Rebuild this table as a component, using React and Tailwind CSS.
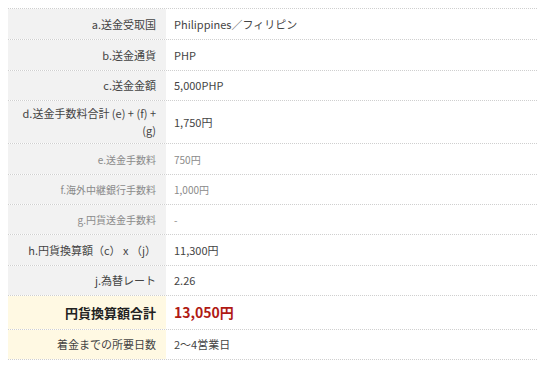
const rows = [
  { label: 'a.送金受取国', value: 'Philippines／フィリピン', h: 'h-[31px]' },
  { label: 'b.送金通貨', value: 'PHP', h: 'h-[31px]' },
  { label: 'c.送金金額', value: '5,000PHP', h: 'h-[30px]' },
  {
    label: (
      <>
        <span className="whitespace-nowrap">d.送金手数料合計 (e) + (f) +</span>
        <br />
        (g)
      </>
    ),
    value: '1,750円',
    h: 'h-[43px]',
  },
  { label: 'e.送金手数料', value: '750円', h: 'h-[31px]', sub: true },
  { label: 'f.海外中継銀行手数料', value: '1,000円', h: 'h-[30px]', sub: true },
  { label: 'g.円貨送金手数料', value: '-', h: 'h-[30px]', sub: true },
  { label: 'h.円貨換算額（c） x （j）', value: '11,300円', h: 'h-[31px]' },
  { label: 'j.為替レート', value: '2.26', h: 'h-[30px]' },
]

function Row({ label, value, h, sub }) {
  return (
    <div className={`flex border-b border-dotted border-[#cfcfcf] ${h}`}>
      <div
        className={`w-[158px] shrink-0 bg-[#f2f2f2] flex items-center justify-end text-right pr-[10px] leading-[17px] ${
          sub ? 'text-[10px] text-[#8a8a8a]' : 'text-[11px] text-[#444]'
        }`}
      >
        <span>{label}</span>
      </div>
      <div
        className={`flex-1 flex items-center pl-[8px] ${
          sub ? 'text-[10px] text-[#8a8a8a]' : 'text-[11px] text-[#444]'
        }`}
      >
        {value}
      </div>
    </div>
  )
}

export default function App() {
  return (
    <div
      className="w-[550px] h-[366px] bg-white pt-[8px] pl-[8px]"
      style={{ fontFamily: '"Noto Sans CJK JP", "Noto Sans", sans-serif' }}
    >
      <div className="w-[529px] border-t border-dotted border-[#cfcfcf]">
        {rows.map((r, i) => (
          <Row key={i} {...r} />
        ))}
        <div className="flex h-[34px] border-b border-dotted border-[#cfcfcf]">
          <div className="w-[158px] shrink-0 bg-[#fff9e3] flex items-center justify-end pr-[10px] text-[13px] font-bold text-[#222]">
            円貨換算額合計
          </div>
          <div className="flex-1 flex items-center pl-[8px] text-[14px] font-bold text-[#b01a14]">
            13,050円
          </div>
        </div>
        <div className="flex h-[30px] border-b border-dotted border-[#cfcfcf]">
          <div className="w-[158px] shrink-0 bg-[#fff9e3] flex items-center justify-end pr-[10px] text-[11px] text-[#444]">
            着金までの所要日数
          </div>
          <div className="flex-1 flex items-center pl-[8px] text-[11px] text-[#444]">
            2～4営業日
          </div>
        </div>
      </div>
    </div>
  )
}
